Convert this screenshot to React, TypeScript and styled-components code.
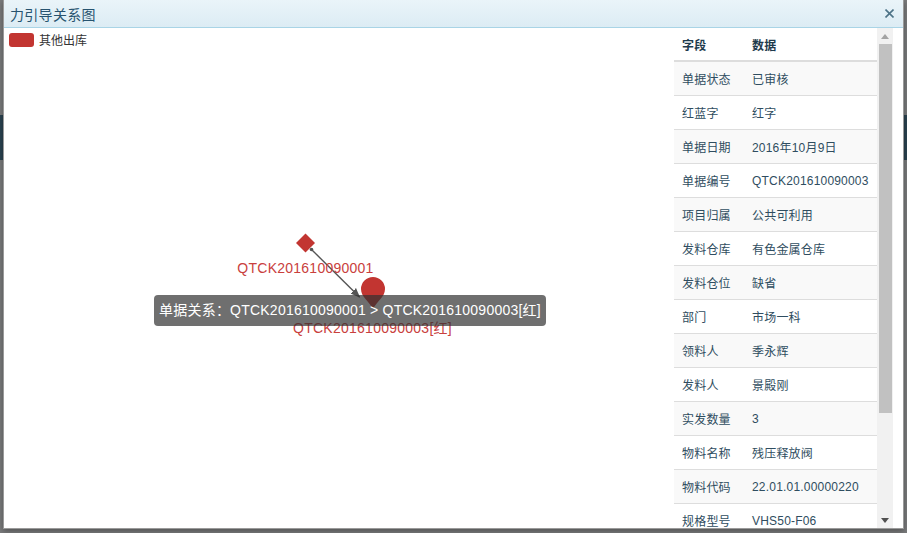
import React from "react";
import styled, { createGlobalStyle } from "styled-components";

const Global = createGlobalStyle`
  html, body { margin: 0; padding: 0; }
  body {
    width: 907px;
    height: 533px;
    overflow: hidden;
    font-family: "Liberation Sans", "Noto Sans CJK SC", sans-serif;
    background: linear-gradient(to bottom, #7a7b7c 0, #7a7b7c 115px, #2b4350 115px, #2b4350 160px, #7a7b7c 160px);
  }
`;

const Backdrop = styled.div`
  width: 907px;
  height: 533px;
  padding: 0 0 0 3px;
  box-sizing: border-box;
`;

const Dialog = styled.div`
  width: 901px;
  height: 529px;
  box-sizing: border-box;
  background: #fff;
  border: 1px solid #9a9a9a;
  border-top: none;
  display: flex;
  flex-direction: column;
  box-shadow: 0 2px 6px rgba(0, 0, 0, 0.35);
`;

const Header = styled.div`
  height: 28px;
  flex: none;
  box-sizing: border-box;
  border-bottom: 1px solid #a9d4e6;
  background: linear-gradient(to bottom, #eaf4f9, #dcecf4);
  display: flex;
  align-items: center;
  justify-content: space-between;
  padding: 0 9px 0 6px;
`;

const Title = styled.span`
  font-family: "Noto Sans CJK SC", sans-serif;
  font-size: 14px;
  color: #27536f;
  line-height: 28px;
  letter-spacing: 0.3px;
`;

const Close = styled.svg`
  width: 9px;
  height: 9px;
  display: block;
`;

const Body = styled.div`
  flex: 1;
  display: flex;
  min-height: 0;
  padding-right: 10px;
`;

const Graph = styled.div`
  position: relative;
  flex: 1;
  overflow: hidden;
`;

const Legend = styled.div`
  display: flex;
  align-items: center;
  gap: 5px;
  padding: 5px 0 0 5px;
  position: relative;
  z-index: 1;
`;

const Swatch = styled.span<{ $color: string }>`
  width: 25px;
  height: 14px;
  border-radius: 3px;
  background: ${(p) => p.$color};
  display: block;
`;

const LegendText = styled.span`
  font-family: "Noto Sans CJK SC", sans-serif;
  font-size: 12px;
  color: #333;
  line-height: 14px;
`;

const Canvas = styled.svg`
  position: absolute;
  left: 0;
  top: 0;
  width: 670px;
  height: 500px;
`;

const NodeLabel = styled.text`
  font-family: "Liberation Sans", "Noto Sans CJK SC", sans-serif;
  font-size: 14px;
  letter-spacing: 0.25px;
  fill: #c9403d;
`;

const Tooltip = styled.div`
  position: absolute;
  left: 150px;
  top: 267px;
  background: rgba(50, 50, 50, 0.7);
  color: #fff;
  border-radius: 4px;
  padding: 0 5px;
  height: 31px;
  line-height: 31px;
  font-size: 14px;
  letter-spacing: 0.22px;
  font-family: "Liberation Sans", "Noto Sans CJK SC", sans-serif;
  white-space: nowrap;
`;

const Panel = styled.div`
  width: 219px;
  flex: none;
  display: flex;
  overflow: hidden;
`;

const TableWrap = styled.div`
  flex: 1;
  overflow: hidden;
`;

const Table = styled.table`
  width: 203px;
  table-layout: fixed;
  border-collapse: collapse;
  font-family: "Liberation Sans", "Noto Sans CJK SC", sans-serif;
  font-size: 12px;
  letter-spacing: 0.2px;
  color: #2f4d60;
`;

const Th = styled.th`
  text-align: left;
  font-weight: bold;
  color: #1f3b4d;
  height: 33px;
  padding: 0 0 0 8px;
  border-bottom: 2px solid #dddddd;
  box-sizing: border-box;
`;

const Tr = styled.tr<{ $odd: boolean }>`
  background: ${(p) => (p.$odd ? "#f9f9f9" : "#ffffff")};
`;

const Td = styled.td`
  height: 33px;
  padding: 0 0 0 8px;
  border-top: 1px solid #dddddd;
  white-space: nowrap;
  overflow: hidden;
`;

const Scrollbar = styled.div`
  width: 16px;
  flex: none;
  background: #f1f1f1;
  display: flex;
  flex-direction: column;
  align-items: center;
`;

const ArrowBtn = styled.div`
  height: 16px;
  width: 16px;
  flex: none;
  display: flex;
  align-items: center;
  justify-content: center;
`;

const Track = styled.div`
  flex: 1;
  width: 100%;
  display: flex;
  flex-direction: column;
  align-items: center;
`;

const Thumb = styled.div`
  width: 13px;
  height: 369px;
  background: #c1c1c1;
  margin-left: 1px;
`;

const rows: [string, string][] = [
  ["单据状态", "已审核"],
  ["红蓝字", "红字"],
  ["单据日期", "2016年10月9日"],
  ["单据编号", "QTCK201610090003"],
  ["项目归属", "公共可利用"],
  ["发料仓库", "有色金属仓库"],
  ["发料仓位", "缺省"],
  ["部门", "市场一科"],
  ["领料人", "季永辉"],
  ["发料人", "景殿刚"],
  ["实发数量", "3"],
  ["物料名称", "残压释放阀"],
  ["物料代码", "22.01.01.00000220"],
  ["规格型号", "VHS50-F06"],
];

export default function App() {
  return (
    <>
      <Global />
      <Backdrop>
        <Dialog>
          <Header>
            <Title>力引导关系图</Title>
            <Close viewBox="0 0 9 9">
              <path d="M0.5 0.5 L8.5 8.5 M8.5 0.5 L0.5 8.5" stroke="#4d7387" strokeWidth="1.6" />
            </Close>
          </Header>
          <Body>
            <Graph>
              <Legend>
                <Swatch $color="#c23531" />
                <LegendText>其他出库</LegendText>
              </Legend>
              <Canvas viewBox="0 0 670 500">
                <defs>
                  <marker id="arr" viewBox="0 0 10 10" refX="9" refY="5" markerWidth="7" markerHeight="7" orient="auto">
                    <path d="M0 1 L10 5 L0 9 Z" fill="#555" />
                  </marker>
                </defs>
                <g transform="translate(-4,-29)">
                  <polygon points="305.5,234.5 315,244 305.5,253.5 296,244" fill="#c23531" />
                  <circle cx="311.5" cy="250.5" r="1.8" fill="#555" />
                  <line x1="311.5" y1="250.5" x2="359.5" y2="298" stroke="#555" strokeWidth="1.4" markerEnd="url(#arr)" />
                  <path d="M373 310 C369 302 361 298 361 290 A12 12 0 1 1 385 290 C385 298 377 302 373 310 Z" fill="#c23531" />
                  <NodeLabel x="305.5" y="274" textAnchor="middle">QTCK201610090001</NodeLabel>
                  <NodeLabel x="372.5" y="334" textAnchor="middle">QTCK201610090003[红]</NodeLabel>
                </g>
              </Canvas>
              <Tooltip>单据关系：QTCK201610090001 &gt; QTCK201610090003[红]</Tooltip>
            </Graph>
            <Panel>
              <TableWrap>
                <Table>
                  <colgroup>
                    <col style={{ width: 70 }} />
                    <col />
                  </colgroup>
                  <thead>
                    <tr>
                      <Th>字段</Th>
                      <Th>数据</Th>
                    </tr>
                  </thead>
                  <tbody>
                    {rows.map(([k, v], i) => (
                      <Tr key={k} $odd={i % 2 === 0}>
                        <Td>{k}</Td>
                        <Td>{v}</Td>
                      </Tr>
                    ))}
                  </tbody>
                </Table>
              </TableWrap>
              <Scrollbar>
                <ArrowBtn>
                  <svg width="8" height="5" viewBox="0 0 8 5"><path d="M0 5 L4 0 L8 5 Z" fill="#a3a3a3" /></svg>
                </ArrowBtn>
                <Track>
                  <Thumb />
                </Track>
                <ArrowBtn>
                  <svg width="8" height="5" viewBox="0 0 8 5"><path d="M0 0 L4 5 L8 0 Z" fill="#505050" /></svg>
                </ArrowBtn>
              </Scrollbar>
            </Panel>
          </Body>
        </Dialog>
      </Backdrop>
    </>
  );
}
